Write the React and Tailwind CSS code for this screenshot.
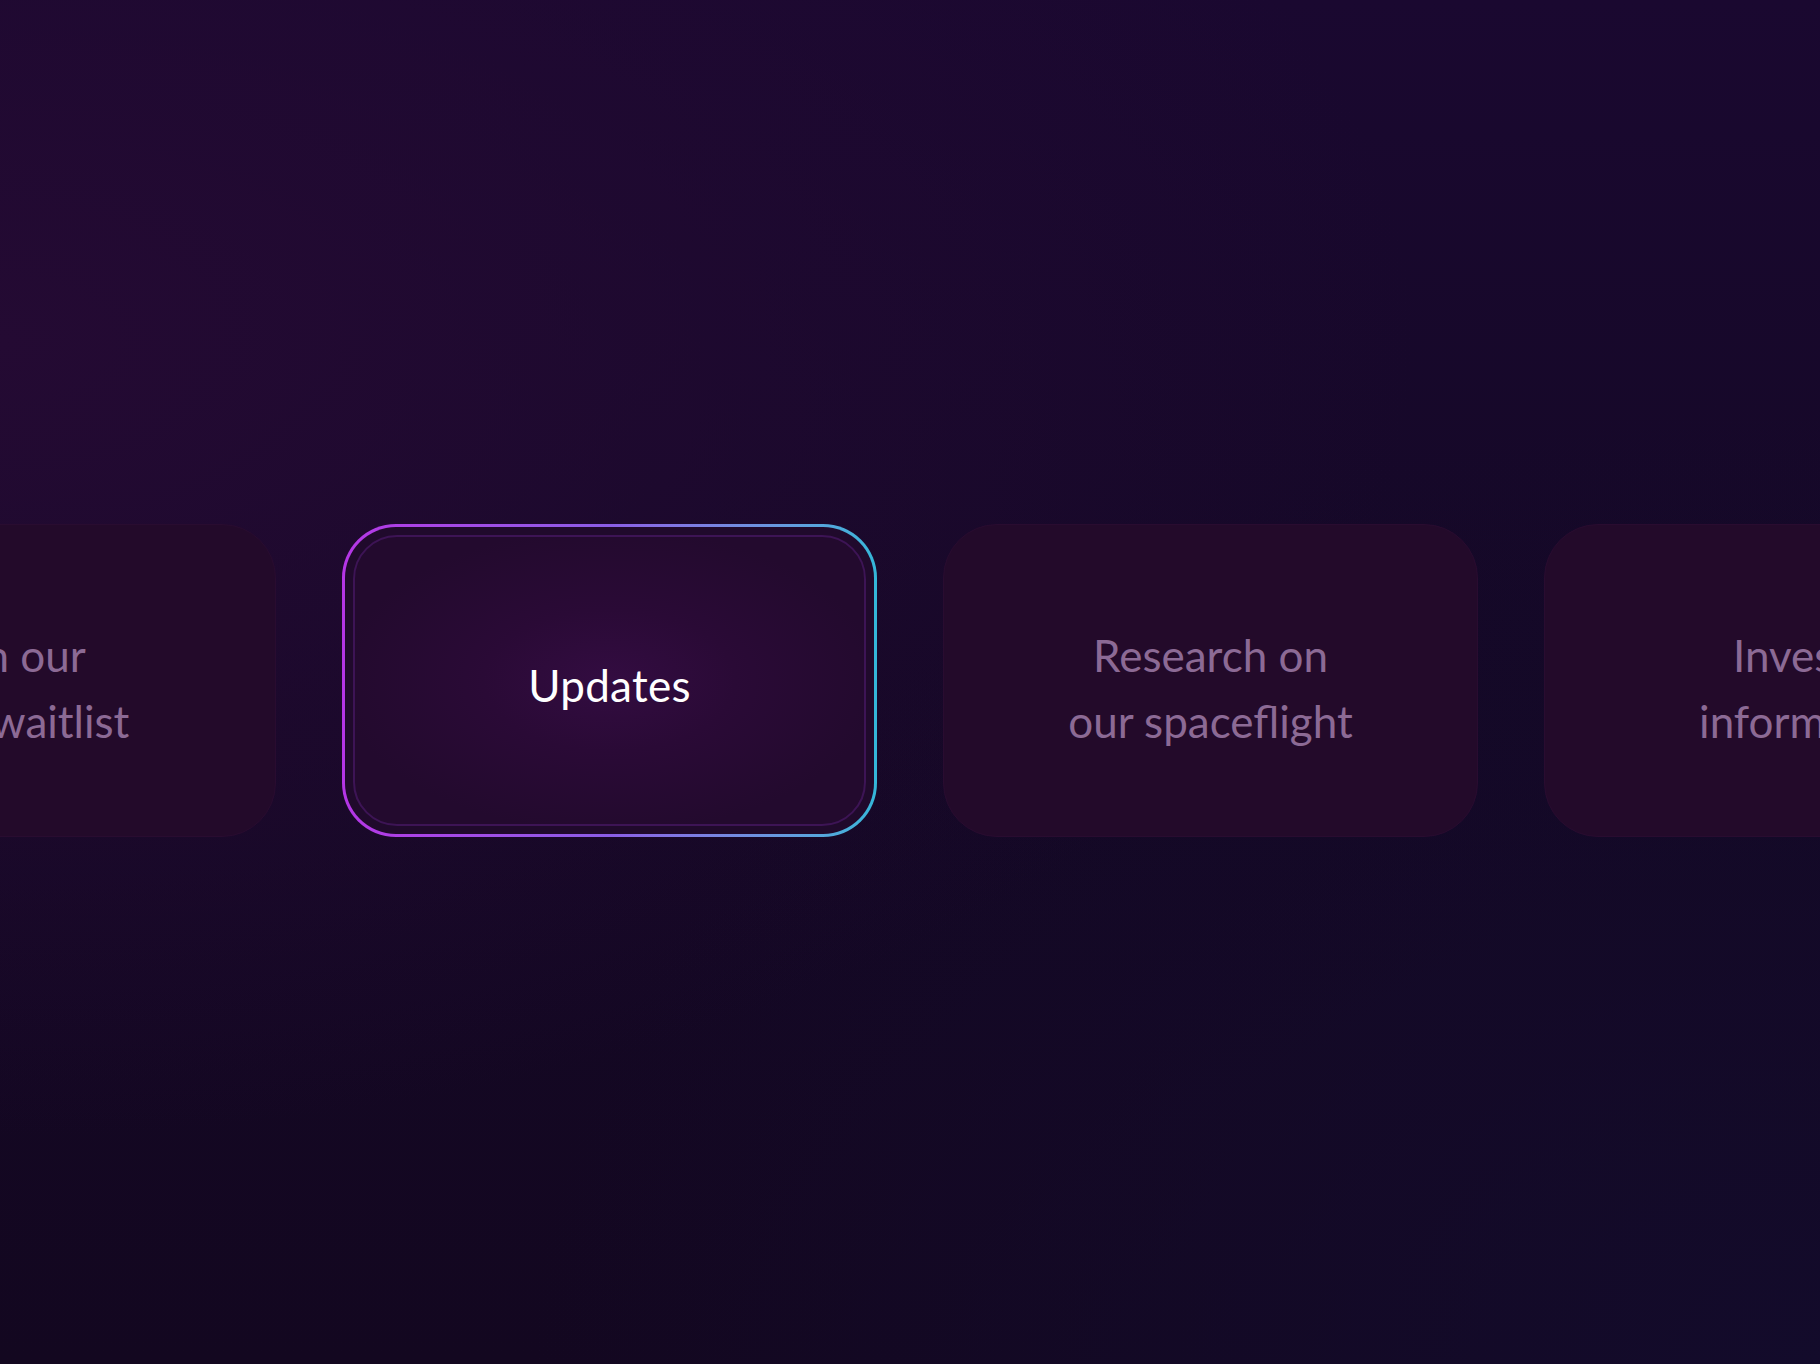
const cards = [
  { lines: ["Join our", "early waitlist"], active: false },
  { lines: ["Updates"], active: true },
  { lines: ["Research on", "our spaceflight"], active: false },
  { lines: ["Investor", "information"], active: false },
];

function Card({ lines, active }) {
  if (active) {
    return (
      <div className="shrink-0 w-[535px] h-[313px] rounded-[54px] p-[3px] bg-gradient-to-r from-[#b535e6] via-[#8b5de6] to-[#33b7d9]">
        <div className="h-full rounded-[51px] bg-[#200a2c] p-[8px]">
          <div className="h-full rounded-[44px] border-2 border-[#3d1455] bg-[radial-gradient(ellipse_at_center,#330c41_0%,#2a0a36_35%,#230a2e_75%)] flex items-center justify-center pt-[8px]">
            <p className="text-[44px] leading-[66px] text-white tracking-[0.3px] text-center">
              {lines[0]}
            </p>
          </div>
        </div>
      </div>
    );
  }
  return (
    <div className="shrink-0 w-[535px] h-[313px] rounded-[54px] bg-[#230a2a] border border-[#290c30] flex flex-col items-center justify-center pt-[14px]">
      {lines.map((l) => (
        <p
          key={l}
          className="text-[44px] leading-[66px] text-[#8c6a95] text-center whitespace-nowrap"
        >
          {l}
        </p>
      ))}
    </div>
  );
}

export default function App() {
  return (
    <div
      className="w-[1820px] h-[1364px] overflow-hidden bg-[#140823] bg-[radial-gradient(ellipse_at_0%_25%,#240a33_0%,rgba(36,10,51,0)_55%),radial-gradient(ellipse_at_100%_100%,#130b2b_0%,rgba(19,11,43,0)_50%),linear-gradient(180deg,#1a0830_0%,#150827_45%,#130720_100%)]"
      style={{ fontFamily: "Lato, 'Open Sans', sans-serif" }}
    >
      <div className="pt-[524px] flex gap-[66px] ml-[-259px]">
        {cards.map((c, i) => (
          <Card key={i} {...c} />
        ))}
      </div>
    </div>
  );
}
